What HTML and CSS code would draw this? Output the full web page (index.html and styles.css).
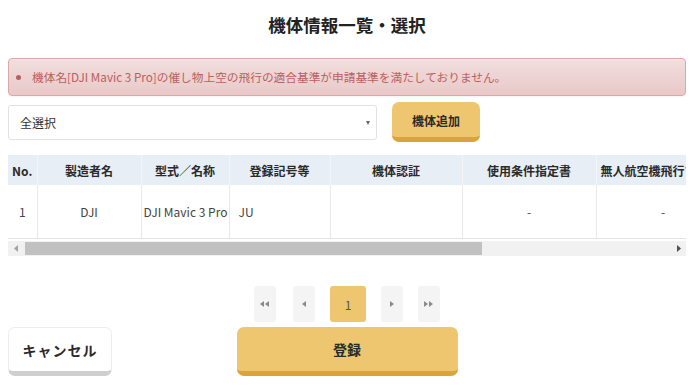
FILE: index.html
```html
<!DOCTYPE html>
<html lang="ja">

<head>
    <meta charset="UTF-8">
    <meta name="viewport" content="width=device-width, initial-scale=1.0">
    <title>機体情報一覧・選択</title>
    <link rel="stylesheet" href="styles.css">
</head>

<body>
    <h2 class="page-title">機体情報一覧・選択</h2>

    <div class="alert-danger">
        <ul class="alert-list">
            <li>機体名[DJI Mavic 3 Pro]の催し物上空の飛行の適合基準が申請基準を満たしておりません。</li>
        </ul>
    </div>

    <div class="filter-row">
        <div class="select-wrap">
            <select class="select-box">
                <option>全選択</option>
            </select>
        </div>
        <button class="btn btn-yellow btn-add">機体追加</button>
    </div>

    <div class="table-scroll">
        <table class="aircraft-table">
            <colgroup>
                <col style="width: 29px">
                <col style="width: 104px">
                <col style="width: 88px">
                <col style="width: 101px">
                <col style="width: 132px">
                <col style="width: 134px">
                <col style="width: 134px">
                <col style="width: 238px">
            </colgroup>
            <thead>
                <tr>
                    <th>No.</th>
                    <th>製造者名</th>
                    <th>型式／名称</th>
                    <th>登録記号等</th>
                    <th>機体認証</th>
                    <th>使用条件指定書</th>
                    <th>無人航空機飛行マニュアル</th>
                    <th>備考</th>
                </tr>
            </thead>
            <tbody>
                <tr>
                    <td class="center">1</td>
                    <td class="center">DJI</td>
                    <td class="left">DJI Mavic 3 Pro</td>
                    <td class="left pad">JU</td>
                    <td></td>
                    <td class="center dash">-</td>
                    <td class="center dash">-</td>
                    <td></td>
                </tr>
            </tbody>
        </table>
    </div>
    <!-- scrollbar drawn by hand (native one is hidden in screenshots) -->
    <div class="hscroll">
        <span class="hs-btn">
            <svg width="4" height="7" viewBox="0 0 4 7"><polygon points="0,3.5 4,0 4,7" fill="#a3a3a3"/></svg>
        </span>
        <div class="hs-track">
            <div class="hs-thumb" style="width: 70.6%"></div>
        </div>
        <span class="hs-btn">
            <svg width="4" height="7" viewBox="0 0 4 7"><polygon points="4,3.5 0,0 0,7" fill="#505050"/></svg>
        </span>
    </div>

    <div class="pager">
        <button class="page-btn narrow">
            <svg width="10" height="6" viewBox="0 0 10 6"><polygon points="0,3 4,0 4,6" fill="#8a8a8a"/><polygon points="5,3 9,0 9,6" fill="#8a8a8a"/></svg>
        </button>
        <button class="page-btn">
            <svg width="5" height="6" viewBox="0 0 5 6"><polygon points="0,3 4,0 4,6" fill="#8a8a8a"/></svg>
        </button>
        <button class="page-btn active">1</button>
        <button class="page-btn">
            <svg width="5" height="6" viewBox="0 0 5 6"><polygon points="4,3 0,0 0,6" fill="#8a8a8a"/></svg>
        </button>
        <button class="page-btn">
            <svg width="10" height="6" viewBox="0 0 10 6"><polygon points="4,3 0,0 0,6" fill="#8a8a8a"/><polygon points="9,3 5,0 5,6" fill="#8a8a8a"/></svg>
        </button>
    </div>

    <div class="action-row">
        <button class="btn btn-white btn-cancel">キャンセル</button>
        <button class="btn btn-yellow btn-submit">登録</button>
        <div></div>
    </div>
</body>

</html>
```

FILE: styles.css
```css
body {
    margin: 8px;
    font-family: "Noto Sans CJK JP", "Noto Sans", sans-serif;
    color: #333;
    background: #fff;
}

.page-title {
    margin: 0;
    padding-top: 4px;
    font-size: 17.5px;
    line-height: 26px;
    font-weight: bold;
    text-align: center;
    color: #222;
}

.alert-danger {
    margin-top: 20px;
    padding: 10px 12px;
    border: 1px solid #dca7a7;
    border-radius: 4px;
    background-image: linear-gradient(to bottom, #f2dede 0, #e9c8c8 100%);
    box-shadow: inset 0 1px 0 rgba(255, 255, 255, .25), 0 1px 2px rgba(0, 0, 0, .05);
    color: #b8605e;
    font-size: 11.7px;
    line-height: 16px;
}

.alert-list {
    margin: 0;
    padding-left: 11px;
}

.filter-row {
    display: flex;
    align-items: center;
    gap: 15px;
    margin-top: 6px;
}

.select-wrap {
    position: relative;
    width: 369px;
}

.select-wrap::after {
    content: "";
    position: absolute;
    right: 7px;
    top: 16px;
    border-left: 2.5px solid transparent;
    border-right: 2.5px solid transparent;
    border-top: 4px solid #666;
}

.select-box {
    -webkit-appearance: none;
    appearance: none;
    width: 100%;
    height: 35px;
    padding: 0 11px;
    border: 1px solid #e2e2e2;
    border-radius: 3px;
    background: #fff;
    font-family: inherit;
    font-size: 12px;
    color: #333;
}

.btn {
    border: none;
    cursor: pointer;
    font-family: inherit;
    color: #2a2a2a;
}

.btn-yellow {
    background-color: #eec66f;
    border-bottom: 5px solid #daa43a;
    border-radius: 7px;
}

.btn-white {
    background-color: #fff;
    border: 1px solid #ececec;
    border-bottom: 5px solid #cfcfcf;
    border-radius: 7px;
}

.btn-add {
    width: 88px;
    height: 40px;
    font-size: 12px;
    font-weight: bold;
    padding-top: 3px;
}

.table-scroll {
    margin-top: 13px;
    overflow: hidden;
}

.hscroll {
    display: flex;
    align-items: center;
    height: 15px;
    margin-top: 2px;
    background: #f1f1f1;
}

.hs-btn {
    width: 15px;
    height: 15px;
    display: flex;
    align-items: center;
    justify-content: center;
}

.hs-track {
    flex: 1;
    height: 100%;
    padding: 1px 0;
    box-sizing: border-box;
}

.hs-thumb {
    height: 100%;
    margin-left: 2px;
    background: #c1c1c1;
}

.aircraft-table {
    width: 960px;
    table-layout: fixed;
    border-collapse: collapse;
    font-size: 12px;
}

.aircraft-table th {
    height: 30px;
    padding: 0 4px;
    background: #e8eef5;
    border-left: 1px solid #f3f5f8;
    font-weight: bold;
    white-space: nowrap;
    overflow: hidden;
    color: #2a2a2a;
}

.aircraft-table th:first-child {
    border-left: none;
}

.aircraft-table td {
    height: 53px;
    padding: 0;
    border-left: 1px solid #e9e9e9;
    border-bottom: 1px solid #e4e4e4;
    white-space: nowrap;
    color: #444;
}

.aircraft-table td:first-child {
    border-left: none;
}

.center {
    text-align: center;
}

.left {
    padding-left: 2px !important;
}

.pad {
    padding-left: 9px !important;
}

.dash {
    color: #999;
}

.pager {
    display: flex;
    justify-content: center;
    gap: 15px;
    margin-top: 30px;
}

.page-btn {
    width: 22px;
    height: 36px;
    padding: 0;
    border: none;
    border-radius: 3px;
    background: #f4f4f4;
    font-family: inherit;
    font-size: 12px;
    color: #555;
    display: flex;
    align-items: center;
    justify-content: center;
}

.page-btn.narrow {
    margin-right: 2px;
}

.page-btn.active {
    width: 36px;
    background: #eec66f;
}

.action-row {
    display: grid;
    grid-template-columns: 1fr auto 1fr;
    align-items: start;
    margin-top: 5px;
}

.btn-cancel {
    justify-self: start;
    width: 104px;
    height: 49px;
    font-size: 14px;
    font-weight: bold;
    letter-spacing: 1px;
}

.btn-submit {
    width: 221px;
    height: 49px;
    font-size: 14px;
    font-weight: bold;
}
```
